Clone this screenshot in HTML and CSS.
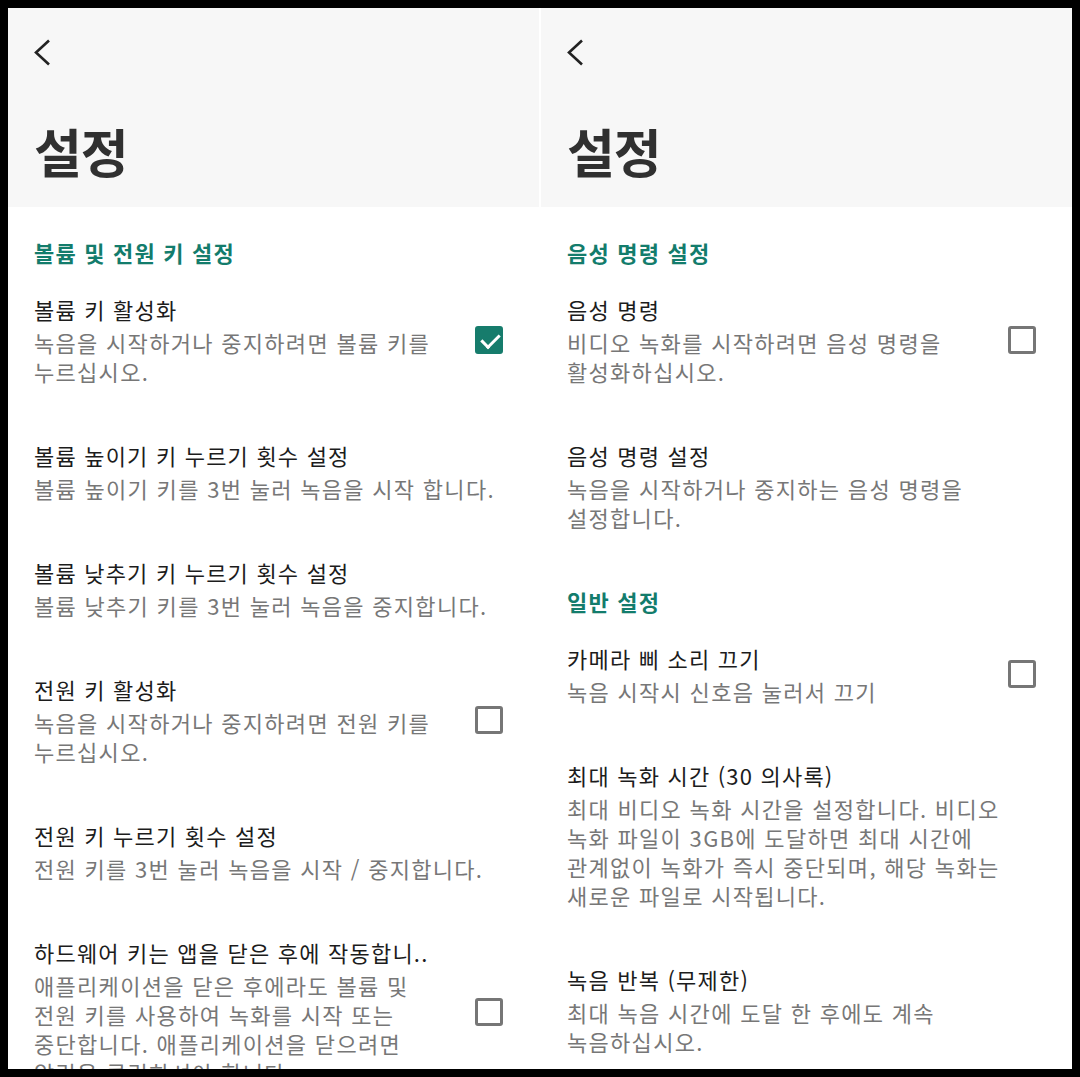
FILE: index.html
```html
<!DOCTYPE html>
<html lang="ko">
<head>
    <meta charset="UTF-8">
    <meta name="viewport" content="width=device-width, initial-scale=1.0">
    <title>설정</title>
    <link rel="stylesheet" href="styles.css">
</head>
<body>
    <div class="screens">
        <!-- left screen -->
        <div class="screen">
            <div class="appbar">
                <svg class="back" width="18" height="27" viewBox="0 0 18 27">
                    <polyline points="15,1.5 2,13.5 15,25.5" fill="none" stroke="#222" stroke-width="2.6"/>
                </svg>
                <h1 class="title">설정</h1>
            </div>
            <div class="list">
                <div class="section">볼륨 및 전원 키 설정</div>
                <div class="item">
                    <div class="text">
                        <div class="item-title">볼륨 키 활성화</div>
                        <div class="item-desc">녹음을 시작하거나 중지하려면 볼륨 키를<br>누르십시오.</div>
                    </div>
                    <div class="check on"></div>
                </div>
                <div class="item">
                    <div class="text">
                        <div class="item-title">볼륨 높이기 키 누르기 횟수 설정</div>
                        <div class="item-desc">볼륨 높이기 키를 3번 눌러 녹음을 시작 합니다.</div>
                    </div>
                </div>
                <div class="item">
                    <div class="text">
                        <div class="item-title">볼륨 낮추기 키 누르기 횟수 설정</div>
                        <div class="item-desc">볼륨 낮추기 키를 3번 눌러 녹음을 중지합니다.</div>
                    </div>
                </div>
                <div class="item">
                    <div class="text">
                        <div class="item-title">전원 키 활성화</div>
                        <div class="item-desc">녹음을 시작하거나 중지하려면 전원 키를<br>누르십시오.</div>
                    </div>
                    <div class="check"></div>
                </div>
                <div class="item">
                    <div class="text">
                        <div class="item-title">전원 키 누르기 횟수 설정</div>
                        <div class="item-desc">전원 키를 3번 눌러 녹음을 시작 / 중지합니다.</div>
                    </div>
                </div>
                <div class="item">
                    <div class="text">
                        <div class="item-title">하드웨어 키는 앱을 닫은 후에 작동합니..</div>
                        <div class="item-desc">애플리케이션을 닫은 후에라도 볼륨 및<br>전원 키를 사용하여 녹화를 시작 또는<br>중단합니다. 애플리케이션을 닫으려면<br>알림을 클릭하셔야 합니다.</div>
                    </div>
                    <div class="check"></div>
                </div>
            </div>
        </div>

        <!-- right screen -->
        <div class="screen">
            <div class="appbar">
                <svg class="back" width="18" height="27" viewBox="0 0 18 27">
                    <polyline points="15,1.5 2,13.5 15,25.5" fill="none" stroke="#222" stroke-width="2.6"/>
                </svg>
                <h1 class="title">설정</h1>
            </div>
            <div class="list">
                <div class="section">음성 명령 설정</div>
                <div class="item">
                    <div class="text">
                        <div class="item-title">음성 명령</div>
                        <div class="item-desc">비디오 녹화를 시작하려면 음성 명령을<br>활성화하십시오.</div>
                    </div>
                    <div class="check"></div>
                </div>
                <div class="item">
                    <div class="text">
                        <div class="item-title">음성 명령 설정</div>
                        <div class="item-desc">녹음을 시작하거나 중지하는 음성 명령을<br>설정합니다.</div>
                    </div>
                </div>
                <div class="section">일반 설정</div>
                <div class="item">
                    <div class="text">
                        <div class="item-title">카메라 삐 소리 끄기</div>
                        <div class="item-desc">녹음 시작시 신호음 눌러서 끄기</div>
                    </div>
                    <div class="check"></div>
                </div>
                <div class="item">
                    <div class="text">
                        <div class="item-title">최대 녹화 시간 (30 의사록)</div>
                        <div class="item-desc">최대 비디오 녹화 시간을 설정합니다. 비디오<br>녹화 파일이 3GB에 도달하면 최대 시간에<br>관계없이 녹화가 즉시 중단되며, 해당 녹화는<br>새로운 파일로 시작됩니다.</div>
                    </div>
                </div>
                <div class="item">
                    <div class="text">
                        <div class="item-title">녹음 반복 (무제한)</div>
                        <div class="item-desc">최대 녹음 시간에 도달 한 후에도 계속<br>녹음하십시오.</div>
                    </div>
                </div>
            </div>
        </div>
    </div>
</body>
</html>
```

FILE: styles.css
```css
* {
    box-sizing: border-box;
}
body {
    margin: 0;
    padding: 8px;
    height: 1077px;
    background: #000;
    font-family: "Noto Sans CJK KR", "Noto Sans", sans-serif;
}
.screens {
    display: flex;
    gap: 2px;
    height: 1061px;
    background: #fff;
}
.screen {
    flex: 1;
    overflow: hidden;
    background: #fff;
}
.appbar {
    background: #f7f7f7;
    height: 199px;
    padding: 31px 26px 0;
}
.back {
    display: block;
}
.title {
    margin: 55px 0 0 0;
    font-size: 52px;
    line-height: 60px;
    font-weight: 700;
    color: #303030;
    letter-spacing: -1px;
}
.list {
    padding-top: 3px;
}
.section {
    padding: 27px 26px 0;
    font-size: 22px;
    line-height: 30px;
    font-weight: 700;
    color: #137c6c;
    letter-spacing: 1.2px;
}
.item {
    display: flex;
    align-items: center;
    padding: 26px 36px 27px 26px;
}
.text {
    flex: 1;
}
.item-title {
    font-size: 22px;
    line-height: 32px;
    color: #1c1c1c;
    letter-spacing: 1.2px;
    white-space: nowrap;
}
.item-desc {
    margin-top: 3px;
    font-size: 22px;
    line-height: 29px;
    color: #777;
    letter-spacing: 1.3px;
    white-space: nowrap;
}
.check {
    width: 28px;
    height: 28px;
    border: 3px solid #767676;
    border-radius: 3px;
    flex: none;
}
.check.on {
    background: #167c6c;
    border-color: #167c6c;
    position: relative;
}
.check.on::after {
    content: "";
    position: absolute;
    left: 7px;
    top: 1px;
    width: 8px;
    height: 15px;
    border: solid #fff;
    border-width: 0 3px 3px 0;
    transform: rotate(45deg);
}
```
